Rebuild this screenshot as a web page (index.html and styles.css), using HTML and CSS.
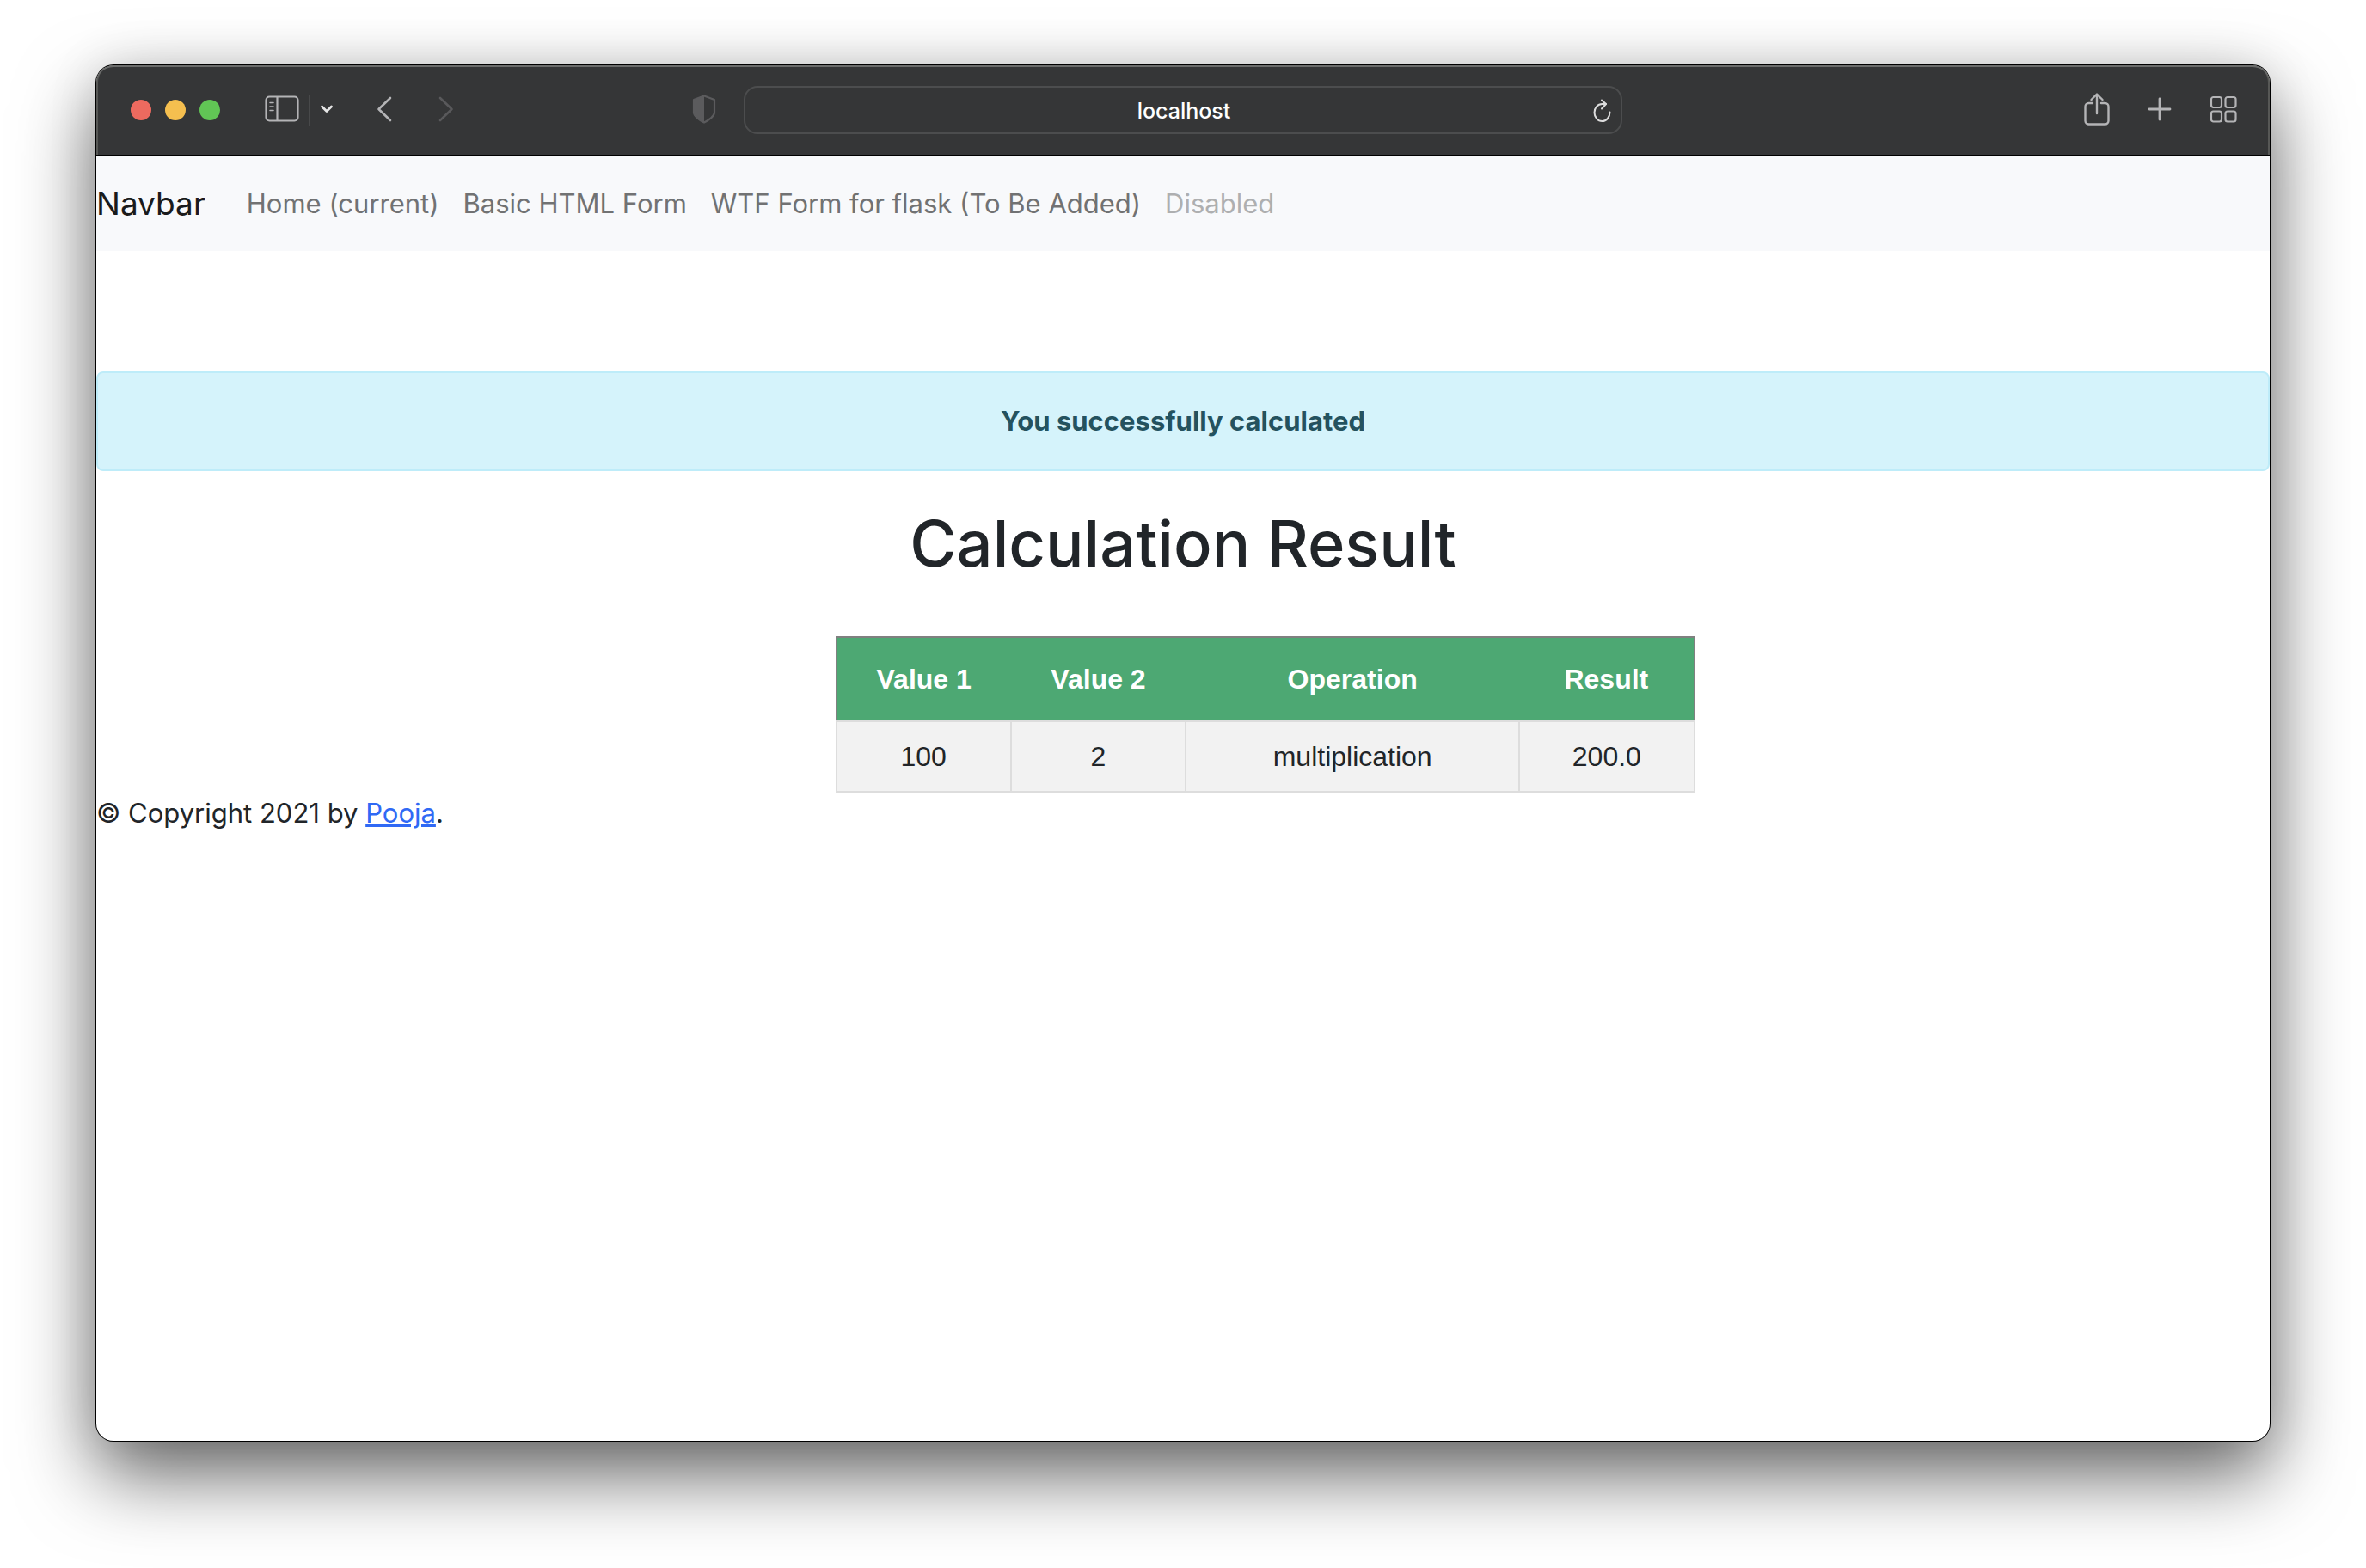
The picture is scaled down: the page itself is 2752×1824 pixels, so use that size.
FILE: index.html
```html
<!DOCTYPE html>
<html lang="en">
<head>
<meta charset="utf-8">
<title>Calculation Result</title>
<link rel="stylesheet" href="styles.css">
</head>
<body>
<div class="window">
  <header class="toolbar">
    <div class="tools tools-left">
      <div class="lights">
        <button class="light light-close" aria-label="Close"></button>
        <button class="light light-minimize" aria-label="Minimize"></button>
        <button class="light light-zoom" aria-label="Zoom"></button>
      </div>
      <div class="sidebar-tools">
        <button class="tool" aria-label="Show sidebar">
          <svg width="40" height="32" viewBox="0 0 40 32" fill="none" stroke="#b4b4b6" stroke-width="2.2"><rect x="1.5" y="1.5" width="37" height="28" rx="4"/><path d="M14.500 1.500v28"/><path d="M6 8.500h4M6 13h4M6 17.500h4" stroke-width="1.600" stroke-linecap="round"/></svg>
        </button>
        <span class="divider"></span>
        <button class="tool" aria-label="Sidebar options">
          <svg width="16" height="12" viewBox="0 0 16 12" fill="none" stroke="#e6e6e6" stroke-width="2.800" stroke-linecap="round" stroke-linejoin="round"><path d="M2.500 3l5.500 5.500L13.500 3"/></svg>
        </button>
      </div>
      <div class="history">
        <button class="tool" aria-label="Back">
          <svg width="18" height="30" viewBox="0 0 18 30" fill="none" stroke="#b4b4b6" stroke-width="2.600" stroke-linecap="round" stroke-linejoin="round"><path d="M16 2L2.500 15L16 28"/></svg>
        </button>
        <button class="tool" aria-label="Forward" disabled>
          <svg width="18" height="30" viewBox="0 0 18 30" fill="none" stroke="#59595b" stroke-width="2.600" stroke-linecap="round" stroke-linejoin="round"><path d="M2 2l13.500 13L2 28"/></svg>
        </button>
      </div>
      <button class="tool shield" aria-label="Privacy report">
        <svg width="28" height="34" viewBox="0 0 28 34"><path d="M14 1.500L26 6v14.500c0 5-6 8.500-12 12C8 29 2 25.500 2 20.500V6z" fill="none" stroke="#5b5b5d" stroke-width="2.200" stroke-linejoin="round"/><path d="M14 1.500L2 6v14.500c0 5 6 8.500 12 12z" fill="#5b5b5d"/></svg>
      </button>
    </div>
    <div class="address">
      <input class="address-input" type="text" value="localhost" aria-label="Address">
      <button class="tool reload" aria-label="Reload">
        <svg width="24" height="28" viewBox="0 0 24 28" fill="none" stroke="#dcdcdc" stroke-width="2" stroke-linecap="round" stroke-linejoin="round"><path d="M21.500 15.500C21.500 21.500 17.500 26 12.500 26S3.500 21.500 3.500 16S7.500 6 12.500 6h4.500"/><path d="M12 1.500L17 6l-5 5.500"/></svg>
      </button>
    </div>
    <div class="tools tools-right">
      <button class="tool" aria-label="Share">
        <svg width="30" height="38" viewBox="0 0 30 38" fill="none" stroke="#b4b4b6" stroke-width="2.400" stroke-linecap="round" stroke-linejoin="round"><path d="M10 12H5.500a4 4 0 0 0-4 4v16.500a4 4 0 0 0 4 4h19a4 4 0 0 0 4-4V16a4 4 0 0 0-4-4H20"/><path d="M15 24V2M8.500 8L15 1.500L21.500 8"/></svg>
      </button>
      <button class="tool" aria-label="New tab">
        <svg width="28" height="28" viewBox="0 0 28 28" fill="none" stroke="#b4b4b6" stroke-width="2.800" stroke-linecap="round"><path d="M14 2v24M2 14h24"/></svg>
      </button>
      <button class="tool" aria-label="Tab overview">
        <svg width="32" height="32" viewBox="0 0 32 32" fill="none" stroke="#b4b4b6" stroke-width="2.200"><rect x="2" y="2" width="12" height="12" rx="2.500"/><rect x="18.500" y="2" width="12" height="12" rx="2.500"/><rect x="2" y="18.500" width="12" height="12" rx="2.500"/><rect x="18.500" y="18.500" width="12" height="12" rx="2.500"/></svg>
      </button>
    </div>
  </header>
  <div class="page">
    <nav class="navbar">
      <a class="brand" href="#">Navbar</a>
      <ul class="nav-list">
        <li><a class="nav-link" href="#">Home (current)</a></li>
        <li><a class="nav-link" href="#">Basic HTML Form</a></li>
        <li><a class="nav-link" href="#">WTF Form for flask (To Be Added)</a></li>
        <li><a class="nav-link nav-link-disabled" href="#" aria-disabled="true">Disabled</a></li>
      </ul>
    </nav>
    <main>
      <div class="alert" role="alert"><strong>You successfully calculated</strong></div>
      <h1 class="title">Calculation Result</h1>
      <table class="results">
        <colgroup><col class="col-value"><col class="col-value"><col class="col-operation"><col class="col-value"></colgroup>
        <thead>
          <tr><th>Value 1</th><th>Value 2</th><th>Operation</th><th>Result</th></tr>
        </thead>
        <tbody>
          <tr><td>100</td><td>2</td><td>multiplication</td><td>200.0</td></tr>
        </tbody>
      </table>
    </main>
    <footer class="footer">© Copyright 2021 by <a class="footer-link" href="#">Pooja</a>.</footer>
  </div>
</div>
</body>
</html>
```
FILE: styles.css
```css
* {
  box-sizing: border-box;
}

body {
  margin: 0;
  min-height: 100vh;
  padding: 76px 112px 148px;
  display: flex;
  background: #fff;
  color: #212529;
  font-family: Inter, "Liberation Sans", sans-serif;
  font-size: 31px;
  line-height: 48px;
}

.window {
  flex: 1;
  display: flex;
  flex-direction: column;
  overflow: hidden;
  border-radius: 20px;
  background: #fff;
  box-shadow: 0 0 0 1px #000, 0 40px 90px rgba(0, 0, 0, 0.6), 0 0 60px rgba(0, 0, 0, 0.1);
}

/* Browser toolbar */

.toolbar {
  display: grid;
  grid-template-columns: 1fr 1022px 1fr;
  align-items: center;
  height: 105px;
  border-bottom: 1px solid #000;
  border-radius: 20px 20px 0 0;
  background: #353637;
  box-shadow: inset 0 2px 0 #6b6c6b, inset 2px 0 0 #575856, inset -2px 0 0 #575856;
}

.tools {
  display: flex;
  align-items: center;
}

.tools-left {
  padding: 0 32px 0 40px;
}

.tools-right {
  justify-content: flex-end;
  gap: 44px;
  padding-right: 38px;
}

.lights {
  display: flex;
  gap: 16px;
}

.light {
  width: 24px;
  height: 24px;
  padding: 0;
  border: 0;
  border-radius: 50%;
}

.light-close {
  background: #ed6a5f;
}

.light-minimize {
  background: #f5bf4f;
}

.light-zoom {
  background: #61c555;
}

.tool {
  display: flex;
  padding: 0 0 2px;
  border: 0;
  background: none;
}

.sidebar-tools {
  display: flex;
  align-items: center;
  gap: 11px;
  margin-left: 52px;
}

.divider {
  width: 2px;
  height: 36px;
  background: #48494a;
}

.history {
  display: flex;
  gap: 54px;
  margin-left: 50px;
}

.shield {
  margin-left: auto;
}

.address {
  display: flex;
  align-items: center;
  height: 56px;
  padding: 2px 10px 0 36px;
  border: 2px solid #4c4d4e;
  border-radius: 16px;
}

.address-input {
  flex: 1;
  min-width: 0;
  padding: 0;
  border: 0;
  background: none;
  color: #fff;
  font: 500 25px/32px Inter, "Liberation Sans", sans-serif;
  text-align: center;
}

.reload {
  padding: 0;
}

/* Site navigation */

.navbar {
  display: flex;
  align-items: center;
  gap: 34px;
  height: 111px;
  background: #f8f9fb;
}

.brand {
  color: #1a1b1c;
  font-size: 37px;
  text-decoration: none;
}

.nav-list {
  display: flex;
  margin: 0;
  padding: 0;
  list-style: none;
}

.nav-link {
  padding: 14px;
  color: #717273;
  text-decoration: none;
}

.nav-link-disabled {
  color: #aeafb0;
}

/* Result */

.alert {
  margin-top: 140px;
  padding: 32px;
  border: 2px solid #beecf9;
  border-radius: 8px;
  background: #d5f3fb;
  color: #24525f;
  text-align: center;
}

.title {
  margin: 36px 0 60px;
  font-size: 74px;
  font-weight: 500;
  line-height: 96px;
  text-align: center;
}

.results {
  width: 1000px;
  margin-left: 34%;
  border: 2px solid #808080;
  border-collapse: collapse;
  table-layout: fixed;
  font-family: "Liberation Sans", Arial, sans-serif;
  font-size: 32px;
  text-align: center;
}

.col-operation {
  width: 388px;
}

.results th {
  padding: 24px 16px;
  background: #4da873;
  color: #fff;
}

.results td {
  padding: 16px;
  border: 2px solid #ddd;
  background: #f2f2f2;
}

.footer-link {
  color: #3069f5;
}
```
